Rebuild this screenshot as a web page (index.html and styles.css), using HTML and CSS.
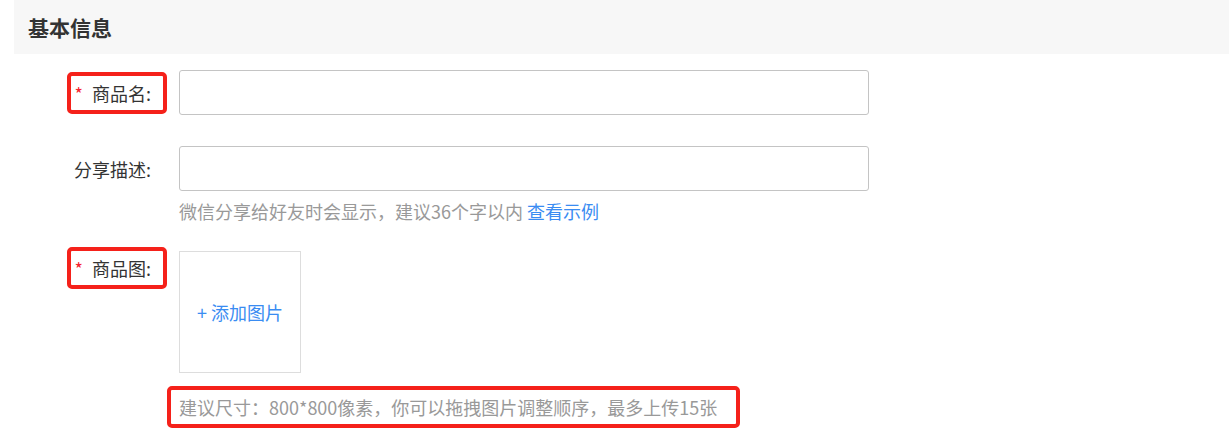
FILE: index.html
```html
<!DOCTYPE html>
<html>

<head>
    <meta charset="utf-8">
    <title>基本信息</title>
    <link rel="stylesheet" href="styles.css">
</head>

<body>
    <div class="panel">
        <div class="panel-title">基本信息</div>
    </div>

    <div class="form">
        <div class="row">
            <div class="label"><span class="label-box mark"><i class="req">*</i> 商品名:</span></div>
            <div class="field">
                <input class="input" type="text">
            </div>
        </div>

        <div class="row row-desc">
            <div class="label"><span class="label-box">分享描述:</span></div>
            <div class="field">
                <input class="input" type="text">
                <p class="hint">微信分享给好友时会显示，建议36个字以内 <a class="link" href="#">查看示例</a></p>
            </div>
        </div>

        <div class="row row-pic">
            <div class="label"><span class="label-box mark"><i class="req">*</i> 商品图:</span></div>
            <div class="field">
                <div class="upload">+ 添加图片</div>
                <p class="hint hint-box mark">建议尺寸：800*800像素，你可以拖拽图片调整顺序，最多上传15张</p>
            </div>
        </div>
    </div>
</body>

</html>
```

FILE: styles.css
```css
html,
body {
    margin: 0;
    padding: 0;
    background: #fff;
}

body {
    font-family: "Noto Sans CJK SC", "Noto Sans", sans-serif;
    font-size: 18px;
    color: #333;
}

.panel {
    margin-left: 14px;
    height: 54px;
    background: #f7f7f7;
    display: flex;
    align-items: center;
}

.panel-title {
    padding-left: 14px;
    font-size: 21px;
    font-weight: bold;
    color: #333;
}

.form {
    padding-top: 16px;
}

.row {
    display: flex;
    align-items: center;
}

.row-desc {
    margin-top: 31px;
    align-items: flex-start;
}

.row-desc .label {
    height: 45px;
    display: flex;
    align-items: center;
    justify-content: flex-end;
}

.row-pic {
    margin-top: 29px;
    align-items: flex-start;
}

.row-pic .label {
    margin-top: -4px;
}

.label {
    width: 167px;
    flex: none;
    text-align: right;
    margin-right: 12px;
}

.label-box {
    display: inline-block;
    box-sizing: border-box;
    height: 42px;
    line-height: 34px;
    padding: 0 12px 0 4px;
    border: 4px solid transparent;
    border-radius: 5px;
}

.mark {
    border: 4px solid #f5211a;
}

.req {
    font-style: normal;
    color: #f5222d;
    margin-right: 5px;
}

.field {
    display: flex;
    flex-direction: column;
    align-items: flex-start;
}

.input {
    box-sizing: border-box;
    width: 690px;
    height: 45px;
    margin: 0;
    border: 1px solid #c4c4c4;
    border-radius: 3px;
    outline: none;
    font: inherit;
    padding: 0 10px;
}

.hint {
    margin: 9px 0 0;
    line-height: 22px;
    color: #999;
}

.link {
    color: #3a8cf2;
    text-decoration: none;
}

.upload {
    box-sizing: border-box;
    width: 122px;
    height: 122px;
    border: 1px solid #ddd;
    display: flex;
    align-items: center;
    justify-content: center;
    color: #3a8cf2;
}

.hint-box {
    box-sizing: border-box;
    margin: 13px 0 0 -12px;
    height: 42px;
    line-height: 34px;
    padding: 0 19px 0 8px;
    border-radius: 5px;
}
```
